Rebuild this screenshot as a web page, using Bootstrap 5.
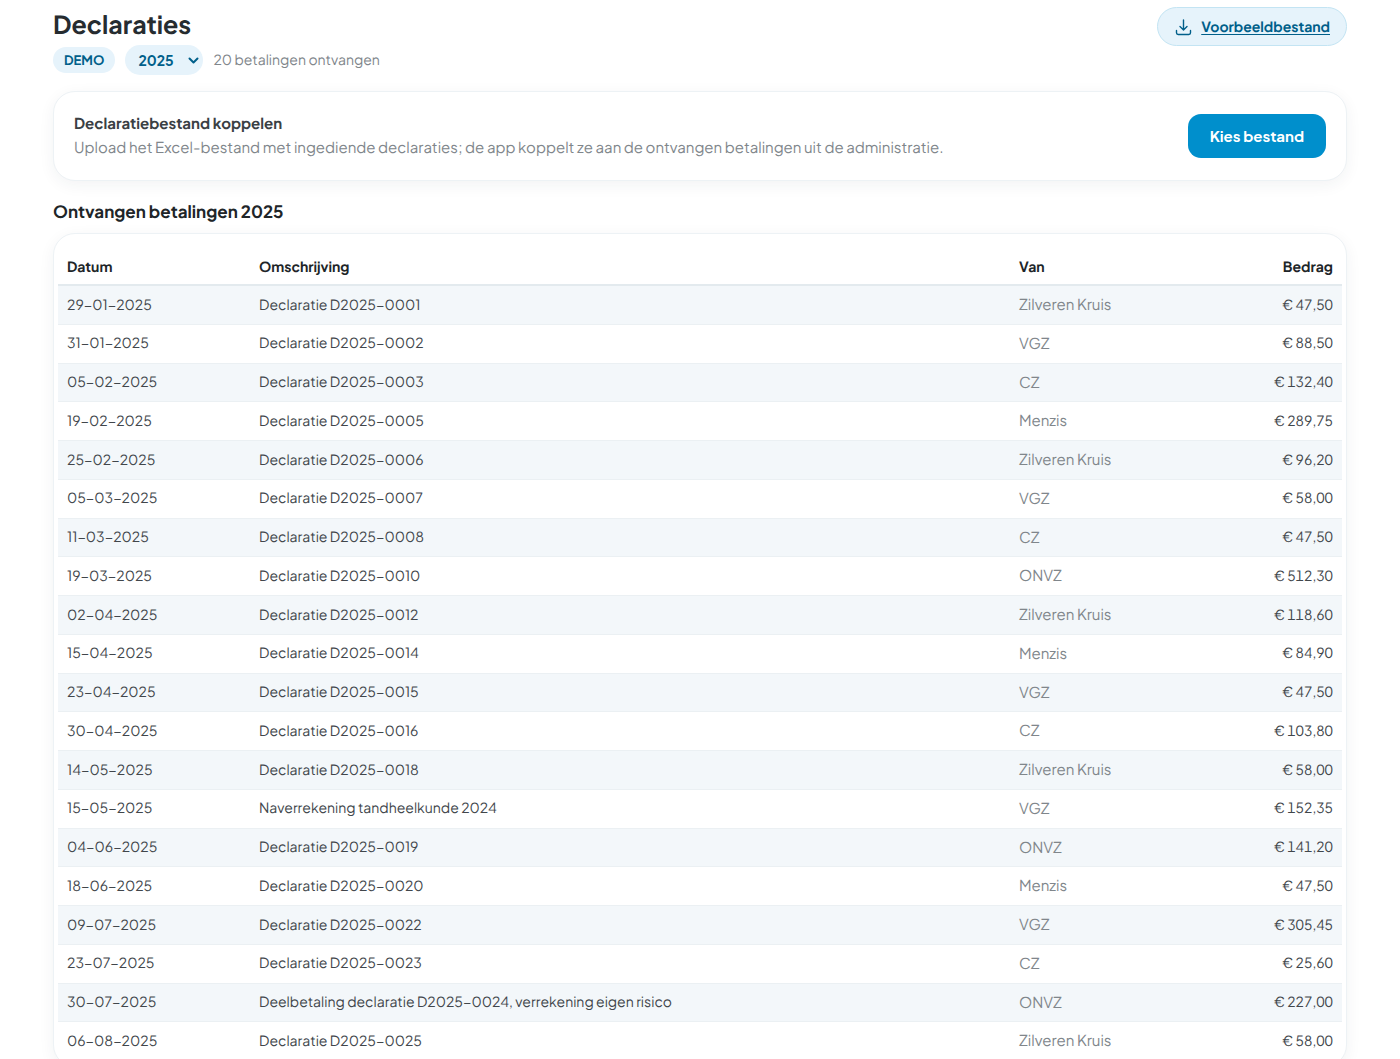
<!DOCTYPE html>
<html lang="nl">
<head>
<meta charset="utf-8">
<meta name="viewport" content="width=device-width, initial-scale=1">
<title>Declaraties</title>
<link href="https://cdn.jsdelivr.net/npm/bootstrap@5.3.0/dist/css/bootstrap.min.css" rel="stylesheet">
<style>
  body { font-family: "Plus Jakarta Sans", Inter, "Open Sans", sans-serif; font-size: 14px; line-height: 24px; color: #41464b; background: #fff; text-rendering: geometricPrecision; }
  .page { padding: 7px 53px 24px; }
  .page-title { font-size: 25px; line-height: 34px; font-weight: 700; color: #262c30; margin: 0 0 4px; }
  .soft { color: #80868b; }
  .lead-in { font-size: 15px; }
  .title-meta { gap: 10px; }
  .tag, .year-select, .btn-sample { background-color: #e6f3fb; color: #005f8a; font-weight: 700; }
  .tag { font-size: 13px; line-height: 26px; padding: 0 11px; }
  .year-select { width: 78px; height: 30px; border: 0; font-size: 14px; line-height: 20px; padding: 0 24px 0 13px; appearance: none; }
  .year-arrow { right: 4px; top: 10px; pointer-events: none; }
  .btn-sample { border: 1px solid #c3e4f3; padding: 7px 16px 6px 17px; gap: 9px; text-decoration: underline; text-underline-offset: 2px; }
  .btn-sample:hover { background-color: #d6ecf8; color: #005f8a; }
  .panel { background: #fff; border: 1px solid #edf2f5; border-radius: 22px; box-shadow: 0 4px 16px rgba(30, 50, 60, .06); }
  .upload { padding: 20px; }
  .upload-title { font-size: 15px; line-height: 24px; font-weight: 700; color: #3a4044; margin: 0; }
  .btn-choose { --bs-btn-bg: #008fcc; --bs-btn-color: #fff; --bs-btn-hover-bg: #007fb6; --bs-btn-hover-color: #fff; --bs-btn-active-bg: #0074a6; --bs-btn-active-color: #fff; border: 0; border-radius: 13px; font-size: 15px; line-height: 24px; font-weight: 700; padding: 10px 22px; }
  .section-title { font-size: 17px; line-height: 24px; font-weight: 700; color: #202528; margin: 18px 0 10px; }
  .table-panel { padding: 14px 4px 5px; }
  .payments { table-layout: fixed; margin: 0; line-height: 1.45; --bs-table-color: #41464b; --bs-table-striped-color: #41464b; --bs-table-striped-bg: #f3f7fa; --bs-table-bg: transparent; border-color: #ebf0f3; }
  .payments > :not(caption) > * > * { padding: 8px 9px; vertical-align: middle; }
  .payments > thead > tr > th { padding: 9px 9px 7px; line-height: 20px; font-weight: 700; color: #202528; border-bottom: 2px solid #e3eaee; }
  .payments > tbody > tr > td.soft { font-size: 15px; color: #80868b; }
  .payments .amount { font-variant-numeric: tabular-nums; text-align: right; }
  .col-date { width: 192px; }
  .col-from { width: 182px; }
  .col-amount { width: 150px; }
</style>
</head>
<body>
<main class="page container-fluid">
  <header class="d-flex justify-content-between align-items-start">
    <div>
      <h1 class="page-title">Declaraties</h1>
      <div class="title-meta d-flex align-items-center">
        <span class="tag rounded-pill">DEMO</span>
        <div class="position-relative">
          <select class="year-select rounded-pill d-block" aria-label="Jaar"><option>2025</option><option>2024</option></select>
          <svg class="year-arrow position-absolute" width="11" height="11" viewBox="0 0 11 11" fill="none" stroke="#005f8a" stroke-width="2" stroke-linecap="round" stroke-linejoin="round" aria-hidden="true"><path d="M1.5 3.5 5.5 7.5l4-4"/></svg>
        </div>
        <span class="soft">20 betalingen ontvangen</span>
      </div>
    </div>
    <a href="#" class="btn-sample rounded-pill d-inline-flex align-items-center">
      <svg width="17" height="17" viewBox="0 0 17 17" fill="none" stroke="currentColor" stroke-width="1.4" stroke-linecap="round" stroke-linejoin="round" aria-hidden="true"><path d="M8.5 1v9.8M5 7.500l3.500 3.400L12 7.500M1.500 11.500v2.300c0 1 .6 1.700 1.700 1.700h10.600c1.100 0 1.700-.7 1.700-1.700v-2.300"/></svg>
      <span>Voorbeeldbestand</span>
    </a>
  </header>

  <section class="panel upload d-flex justify-content-between align-items-center gap-3 mt-3">
    <div>
      <h2 class="upload-title">Declaratiebestand koppelen</h2>
      <p class="soft lead-in mb-0">Upload het Excel-bestand met ingediende declaraties; de app koppelt ze aan de ontvangen betalingen uit de administratie.</p>
    </div>
    <button type="button" class="btn btn-choose flex-shrink-0">Kies bestand</button>
  </section>

  <h2 class="section-title">Ontvangen betalingen 2025</h2>
  <section class="panel table-panel">
    <table class="table table-striped payments">
      <thead><tr><th scope="col" class="col-date">Datum</th><th scope="col">Omschrijving</th><th scope="col" class="col-from">Van</th><th scope="col" class="col-amount text-end">Bedrag</th></tr></thead>
      <tbody>
        <tr><td>29-01-2025</td><td>Declaratie D2025-0001</td><td class="soft">Zilveren Kruis</td><td class="amount">€ 47,50</td></tr>
        <tr><td>31-01-2025</td><td>Declaratie D2025-0002</td><td class="soft">VGZ</td><td class="amount">€ 88,50</td></tr>
        <tr><td>05-02-2025</td><td>Declaratie D2025-0003</td><td class="soft">CZ</td><td class="amount">€ 132,40</td></tr>
        <tr><td>19-02-2025</td><td>Declaratie D2025-0005</td><td class="soft">Menzis</td><td class="amount">€ 289,75</td></tr>
        <tr><td>25-02-2025</td><td>Declaratie D2025-0006</td><td class="soft">Zilveren Kruis</td><td class="amount">€ 96,20</td></tr>
        <tr><td>05-03-2025</td><td>Declaratie D2025-0007</td><td class="soft">VGZ</td><td class="amount">€ 58,00</td></tr>
        <tr><td>11-03-2025</td><td>Declaratie D2025-0008</td><td class="soft">CZ</td><td class="amount">€ 47,50</td></tr>
        <tr><td>19-03-2025</td><td>Declaratie D2025-0010</td><td class="soft">ONVZ</td><td class="amount">€ 512,30</td></tr>
        <tr><td>02-04-2025</td><td>Declaratie D2025-0012</td><td class="soft">Zilveren Kruis</td><td class="amount">€ 118,60</td></tr>
        <tr><td>15-04-2025</td><td>Declaratie D2025-0014</td><td class="soft">Menzis</td><td class="amount">€ 84,90</td></tr>
        <tr><td>23-04-2025</td><td>Declaratie D2025-0015</td><td class="soft">VGZ</td><td class="amount">€ 47,50</td></tr>
        <tr><td>30-04-2025</td><td>Declaratie D2025-0016</td><td class="soft">CZ</td><td class="amount">€ 103,80</td></tr>
        <tr><td>14-05-2025</td><td>Declaratie D2025-0018</td><td class="soft">Zilveren Kruis</td><td class="amount">€ 58,00</td></tr>
        <tr><td>15-05-2025</td><td>Naverrekening tandheelkunde 2024</td><td class="soft">VGZ</td><td class="amount">€ 152,35</td></tr>
        <tr><td>04-06-2025</td><td>Declaratie D2025-0019</td><td class="soft">ONVZ</td><td class="amount">€ 141,20</td></tr>
        <tr><td>18-06-2025</td><td>Declaratie D2025-0020</td><td class="soft">Menzis</td><td class="amount">€ 47,50</td></tr>
        <tr><td>09-07-2025</td><td>Declaratie D2025-0022</td><td class="soft">VGZ</td><td class="amount">€ 305,45</td></tr>
        <tr><td>23-07-2025</td><td>Declaratie D2025-0023</td><td class="soft">CZ</td><td class="amount">€ 25,60</td></tr>
        <tr><td>30-07-2025</td><td>Deelbetaling declaratie D2025-0024, verrekening eigen risico</td><td class="soft">ONVZ</td><td class="amount">€ 227,00</td></tr>
        <tr><td>06-08-2025</td><td>Declaratie D2025-0025</td><td class="soft">Zilveren Kruis</td><td class="amount">€ 58,00</td></tr>
      </tbody>
    </table>
  </section>
</main>
<script src="https://cdn.jsdelivr.net/npm/bootstrap@5.3.0/dist/js/bootstrap.bundle.min.js"></script>
</body>
</html>
